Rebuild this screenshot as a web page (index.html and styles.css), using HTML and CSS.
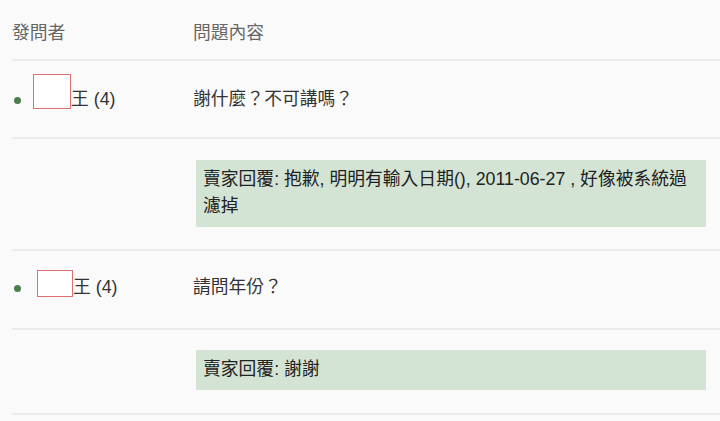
FILE: index.html
```html
<!DOCTYPE html>
<html lang="zh-Hant">
<head>
<meta charset="utf-8">
<link rel="stylesheet" href="styles.css">
</head>
<body>
<div class="qa">
  <div class="row head">
    <div class="col-who">發問者</div>
    <div class="col-q">問題內容</div>
  </div>
  <div class="row ask ask1">
    <div class="col-who"><span class="dot"></span><span class="img img1"></span>王 (4)</div>
    <div class="col-q">謝什麼？不可講嗎？</div>
  </div>
  <div class="row reply reply1">
    <div class="col-who"></div>
    <div class="col-q"><div class="answer">賣家回覆: 抱歉, 明明有輸入日期(), 2011-06-27 , 好像被系統過濾掉</div></div>
  </div>
  <div class="row ask ask2">
    <div class="col-who"><span class="dot"></span><span class="img img2"></span>王 (4)</div>
    <div class="col-q">請問年份？</div>
  </div>
  <div class="row reply reply2">
    <div class="col-who"></div>
    <div class="col-q"><div class="answer">賣家回覆: 謝謝</div></div>
  </div>
</div>
</body>
</html>
```

FILE: styles.css
```css
html, body {
  margin: 0;
  padding: 0;
  background: #fafafa;
}
body {
  font-family: "Liberation Sans", "Noto Sans CJK TC", sans-serif;
  font-size: 17.8px;
  color: #333;
}
.qa {
  margin-left: 12px;
}
.row {
  display: grid;
  grid-template-columns: 181px 1fr;
  align-items: center;
  border-bottom: 2px solid #ebebeb;
  box-sizing: border-box;
}
.head {
  height: 61px;
  color: #666;
  padding-top: 7px;
}
.ask1 { height: 78px; }
.ask2 { height: 79px; padding-bottom: 5px; }
.col-who {
  display: flex;
  align-items: center;
  line-height: 22px;
}
.col-q {
  line-height: 22px;
}
.dot {
  width: 7px;
  height: 7px;
  border-radius: 50%;
  background: #4d7d4d;
  margin-left: 2px;
  margin-top: 2px;
}
.img {
  box-sizing: border-box;
  border: 1px solid #e07070;
  background: #fff;
  display: inline-block;
}
.img1 {
  width: 38px;
  height: 35px;
  margin-left: 12px;
  margin-top: -15px;
}
.img2 {
  width: 36px;
  height: 27px;
  margin-left: 16px;
  margin-top: -7px;
}
.reply {
  align-items: start;
}
.reply1 { height: 112px; padding-top: 21px; }
.reply2 { height: 85px; padding-top: 20px; }
.answer {
  margin-left: 3px;
  margin-right: 14px;
  background: #d3e4d5;
  color: #222;
  line-height: 27px;
  padding: 6px 8px 7px 7px;
}
```
